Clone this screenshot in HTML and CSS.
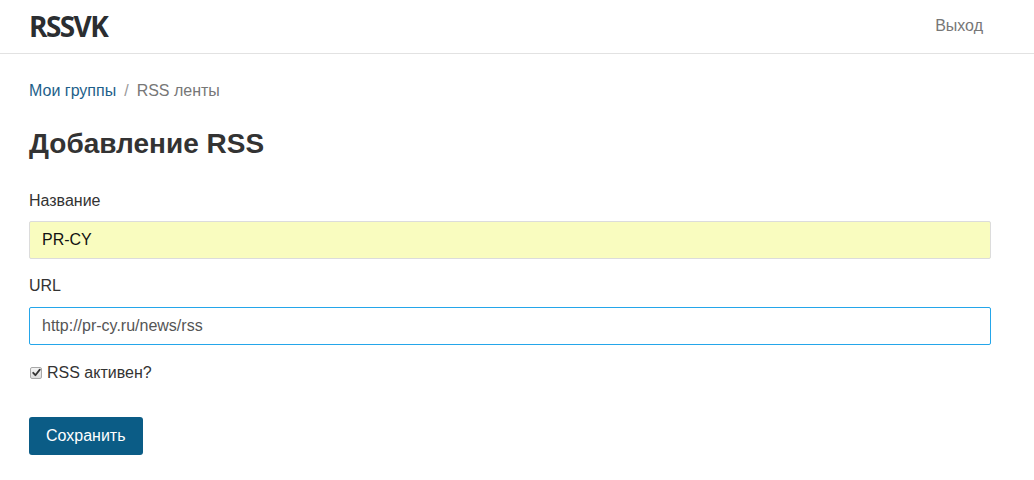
FILE: index.html
```html
<!DOCTYPE html>
<html lang="ru">
<head>
<meta charset="utf-8">
<title>RSSVK</title>
<link rel="stylesheet" href="styles.css">
</head>
<body>
<header class="navbar">
  <div class="container nav-inner">
    <a class="brand" href="#">RSSVK</a>
    <a class="nav-link" href="#">Выход</a>
  </div>
</header>
<main class="container">
  <nav class="breadcrumb">
    <a href="#">Мои группы</a>
    <span class="sep">/</span>
    <span class="current">RSS ленты</span>
  </nav>
  <h1 class="title">Добавление RSS</h1>
  <form class="form">
    <div class="field">
      <label class="label" for="name">Название</label>
      <input class="input input-filled" id="name" type="text" value="PR-CY">
    </div>
    <div class="field">
      <label class="label" for="url">URL</label>
      <input class="input input-focus" id="url" type="text" value="http://pr-cy.ru/news/rss">
    </div>
    <label class="check">
      <span class="check-box"><svg width="9" height="9" viewBox="0 0 9 9"><path d="M1.2 4.8 L3.4 7.2 L7.8 1.6" fill="none" stroke="#333" stroke-width="1.8" stroke-linecap="round" stroke-linejoin="round"/></svg></span>
      <span>RSS активен?</span>
    </label>
    <div class="actions">
      <button class="btn" type="button">Сохранить</button>
    </div>
  </form>
</main>
</body>
</html>
```
FILE: styles.css
```css
* { box-sizing: border-box; }
html, body { margin: 0; padding: 0; background: #fff; }
body {
  font-family: "Liberation Sans", Arial, sans-serif;
  font-size: 16px;
  line-height: 22px;
  color: #333;
}
.container {
  margin: 0 43px 0 29px;
}
.navbar {
  height: 54px;
  border-bottom: 1px solid #e2e2e2;
}
.nav-inner {
  height: 53px;
  display: flex;
  align-items: center;
  justify-content: space-between;
}
.brand {
  font-family: "Open Sans", "Noto Sans", sans-serif;
  font-weight: 700;
  font-size: 28px;
  letter-spacing: -1.6px;
  color: #2b2e31;
  text-decoration: none;
  line-height: 30px;
  margin-top: -1px;
}
.nav-link {
  color: #777;
  text-decoration: none;
  margin-right: 8px;
  margin-top: -2px;
}
.breadcrumb {
  margin-top: 26px;
  display: flex;
  gap: 8px;
}
.breadcrumb a { color: #1d5f8a; text-decoration: none; }
.breadcrumb .sep { color: #999; }
.breadcrumb .current { color: #777; }
.title {
  margin: 26px 0 0;
  font-size: 28px;
  line-height: 31px;
  font-weight: 700;
  color: #333;
}
.form { margin-top: 31px; }
.field { display: flex; flex-direction: column; }
.field + .field { margin-top: 16px; }
.label { margin-bottom: 9px; }
.field + .field .label { margin-bottom: 10px; }
.input {
  height: 38px;
  width: 100%;
  padding: 0 12px;
  font-family: "Liberation Sans", Arial, sans-serif;
  font-size: 16px;
  border-radius: 2px;
  outline: none;
}
.input-filled {
  background: #f9fcbf;
  border: 1px solid #dcdcdc;
  color: #111;
}
.input-focus {
  background: #fff;
  border: 1px solid #24a6ea;
  color: #555;
}
.check {
  margin-top: 17px;
  display: flex;
  align-items: center;
  gap: 5px;
  padding-left: 1px;
}
.check-box {
  width: 12px;
  height: 12px;
  border: 1px solid #a8a8a8;
  border-radius: 2px;
  background: linear-gradient(#f4f4f4, #dcdcdc);
  display: flex;
  align-items: center;
  justify-content: center;
  margin-top: -1px;
}
.actions { margin-top: 33px; }
.btn {
  height: 38px;
  padding: 0 17px;
  background: #0b5c86;
  color: #fff;
  border: none;
  border-radius: 3px;
  font-family: "Liberation Sans", Arial, sans-serif;
  font-size: 16px;
  cursor: pointer;
}
```
